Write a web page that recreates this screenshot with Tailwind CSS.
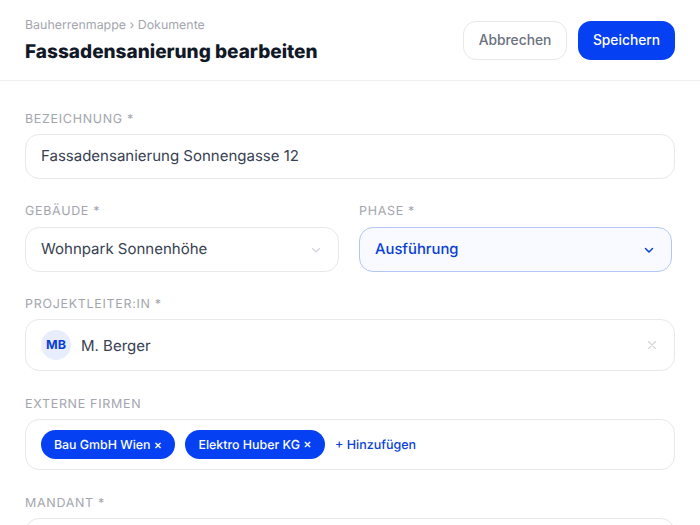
<!DOCTYPE html>
<html lang="de">
<head>
    <meta charset="UTF-8" />
    <title>Fassadensanierung bearbeiten</title>
    <script src="https://cdn.jsdelivr.net/npm/@tailwindcss/browser@4"></script>
</head>
<body class="bg-white font-['Inter',sans-serif] [text-rendering:geometricPrecision] antialiased h-[525px] overflow-hidden">

    <!-- Header -->
    <header class="h-[81px] border-b border-[#f0f0f2] flex items-center justify-between px-[25px]">
        <div>
            <p class="text-[12.4px] leading-4 text-[#a3a6ad]">Bauherrenmappe › Dokumente</p>
            <h1 class="mt-[7px] text-[19px] leading-6 font-extrabold text-[#111827]">Fassadensanierung bearbeiten</h1>
        </div>
        <div class="flex gap-[11px]">
            <button class="h-[39px] w-[104px] rounded-[13px] border border-[#e8e8ea] text-[13.8px] font-medium text-[#6b7280]">Abbrechen</button>
            <button class="h-[39px] w-[97px] rounded-[13px] bg-[#0540f2] text-[13.8px] font-medium text-white">Speichern</button>
        </div>
    </header>

    <form class="px-[25px] pt-[31px] h-[444px] overflow-hidden">
        <!-- Bezeichnung -->
        <label class="block text-[12.5px] leading-4 tracking-[0.055em] text-[#a3a6ad]">BEZEICHNUNG *</label>
        <div class="mt-[6px] h-[45px] rounded-[14px] border border-[#e8e8ea] flex items-center px-[15px] text-[15px] text-[#374151]">Fassadensanierung Sonnengasse 12</div>

        <!-- Gebäude / Phase -->
        <div class="mt-[25px] grid grid-cols-[314px_313px] gap-5">
            <div>
                <label class="block text-[12.5px] leading-4 tracking-[0.055em] text-[#a3a6ad]">GEBÄUDE *</label>
                <div class="mt-[7px] h-[45px] rounded-[14px] border border-[#e8e8ea] flex items-center justify-between pl-[15px] pr-[17px] text-[15px] text-[#374151]">
                    Wohnpark Sonnenhöhe
                    <svg class="w-2.5 h-2.5 text-[#d1d5db]" viewBox="0 0 10 10" fill="none" stroke="currentColor" stroke-width="1.2" stroke-linecap="round" stroke-linejoin="round"><path d="M1.5 3.5 5 7l3.5-3.5"/></svg>
                </div>
            </div>
            <div>
                <label class="block text-[12.5px] leading-4 tracking-[0.055em] text-[#a3a6ad]">PHASE *</label>
                <div class="mt-[7px] h-[45px] rounded-[14px] border-[1.5px] border-[#b4c6f7] bg-[#f8faff] flex items-center justify-between pl-[15px] pr-[17px] text-[14.8px] font-medium text-[#0a3fd6]">
                    Ausführung
                    <svg class="w-2.5 h-2.5 text-[#0a3fd6]" viewBox="0 0 10 10" fill="none" stroke="currentColor" stroke-width="1.5" stroke-linecap="round" stroke-linejoin="round"><path d="M1.5 3.5 5 7l3.5-3.5"/></svg>
                </div>
            </div>
        </div>

        <!-- Projektleiter:in -->
        <label class="mt-[25px] block text-[12.5px] leading-4 tracking-[0.055em] text-[#a3a6ad]">PROJEKTLEITER:IN *</label>
        <div class="mt-[6px] h-[52px] rounded-[14px] border border-[#e8e8ea] flex items-center justify-between pl-[15px] pr-[17px]">
            <div class="flex items-center gap-2.5 text-[15px] text-[#374151]">
                <span class="w-[30px] h-[30px] rounded-full bg-[#e8edfc] flex items-center justify-center pt-0.5 text-[12.5px] font-bold text-[#0a3fd6]">MB</span>
                <span class="mt-0.5">M. Berger</span>
            </div>
            <svg class="w-2.5 h-2.5 text-[#d1d5db]" viewBox="0 0 10 10" fill="none" stroke="currentColor" stroke-width="1.1" stroke-linecap="round"><path d="M1.5 1.5l7 7M8.5 1.5l-7 7"/></svg>
        </div>

        <!-- Externe Firmen -->
        <label class="mt-[26px] block text-[12.5px] leading-4 tracking-[0.055em] text-[#a3a6ad]">EXTERNE FIRMEN</label>
        <div class="mt-[6px] h-[51px] rounded-[14px] border border-[#e8e8ea] flex items-center pl-[15px]">
            <span class="h-[29px] w-[134px] rounded-full bg-[#0540f2] flex items-center justify-center pt-0.5 text-[12.4px] font-medium text-white">Bau GmbH Wien ×</span>
            <span class="ml-2.5 h-[29px] w-[140px] rounded-full bg-[#0540f2] flex items-center justify-center pt-0.5 text-[12.4px] font-medium text-white">Elektro Huber KG ×</span>
            <span class="ml-2.5 mt-1 text-[12.5px] font-medium text-[#0a3fd6]">+ Hinzufügen</span>
        </div>

        <!-- Mandant -->
        <label class="mt-[26px] block text-[12.5px] leading-4 tracking-[0.055em] text-[#a3a6ad]">MANDANT *</label>
        <div class="mt-[6px] h-[45px] rounded-[14px] border border-[#e8e8ea]"></div>
    </form>
</body>
</html>
